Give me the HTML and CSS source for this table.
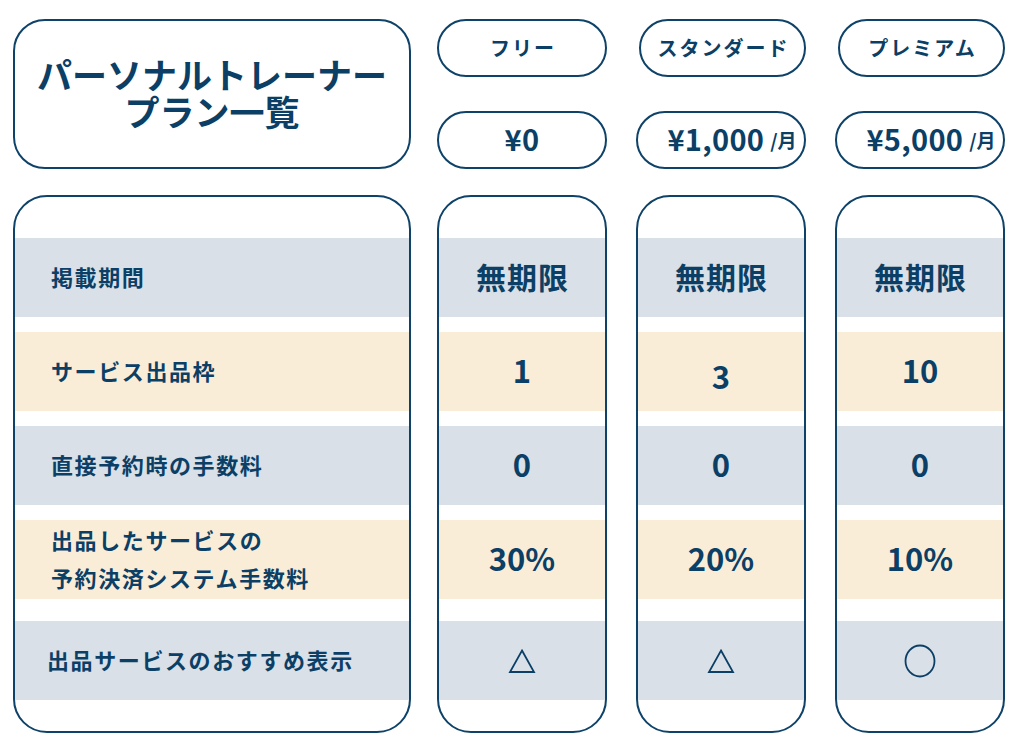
FILE: index.html
```html
<!DOCTYPE html>
<html lang="ja">
<head>
<meta charset="utf-8">
<title>パーソナルトレーナー プラン一覧</title>
<link rel="stylesheet" href="styles.css">
</head>
<body>
<div class="page">
  <div class="col col-label">
    <div class="title-box"><h1 class="title"><span class="title-line">パーソナルトレーナー</span><span class="title-line">プラン一覧</span></h1></div>
    <div class="table-box">
      <div class="row row-blue"><span class="label">掲載期間</span></div>
      <div class="row row-cream"><span class="label">サービス出品枠</span></div>
      <div class="row row-blue"><span class="label">直接予約時の手数料</span></div>
      <div class="row row-cream"><span class="label label-multi">出品したサービスの<br>予約決済システム手数料</span></div>
      <div class="row row-blue row-last"><span class="label label-wide">出品サービスのおすすめ表示</span></div>
    </div>
  </div>

  <div class="col col-plan">
    <div class="pill name">フリー</div>
    <div class="pill price price-free"><span class="amount">¥0</span></div>
    <div class="table-box">
      <div class="row row-blue"><span class="value value-kanji">無期限</span></div>
      <div class="row row-cream"><span class="value">1</span></div>
      <div class="row row-blue"><span class="value">0</span></div>
      <div class="row row-cream"><span class="value">30%</span></div>
      <div class="row row-blue row-last"><svg class="mark" width="28" height="26" viewBox="0 0 28 26"><polygon points="14,2.5 26,24 2,24" fill="none" stroke="#0b3f66" stroke-width="1.8" stroke-linejoin="miter"/></svg></div>
    </div>
  </div>

  <div class="col col-plan">
    <div class="pill name name-shift">スタンダード</div>
    <div class="pill price"><span class="amount">¥1,000</span><span class="per">/月</span></div>
    <div class="table-box">
      <div class="row row-blue"><span class="value value-kanji">無期限</span></div>
      <div class="row row-cream"><span class="value value-drop">3</span></div>
      <div class="row row-blue"><span class="value">0</span></div>
      <div class="row row-cream"><span class="value">20%</span></div>
      <div class="row row-blue row-last"><svg class="mark" width="28" height="26" viewBox="0 0 28 26"><polygon points="14,2.5 26,24 2,24" fill="none" stroke="#0b3f66" stroke-width="1.8" stroke-linejoin="miter"/></svg></div>
    </div>
  </div>

  <div class="col col-plan">
    <div class="pill name name-shift">プレミアム</div>
    <div class="pill price"><span class="amount">¥5,000</span><span class="per">/月</span></div>
    <div class="table-box">
      <div class="row row-blue"><span class="value value-kanji">無期限</span></div>
      <div class="row row-cream"><span class="value">10</span></div>
      <div class="row row-blue"><span class="value">0</span></div>
      <div class="row row-cream"><span class="value">10%</span></div>
      <div class="row row-blue row-last"><svg class="mark" width="32" height="34" viewBox="0 0 32 34"><ellipse cx="16" cy="17" rx="14.5" ry="15.5" fill="none" stroke="#0b3f66" stroke-width="1.8"/></svg></div>
    </div>
  </div>
</div>
</body>
</html>
```

FILE: styles.css
```css
* {
  box-sizing: border-box;
}

html, body {
  margin: 0;
  padding: 0;
  background: #ffffff;
}

body {
  font-family: "Noto Sans CJK JP", "Noto Sans", sans-serif;
  color: #0b3f66;
}

.page {
  display: flex;
  align-items: flex-start;
  padding: 19px 0 0 13px;
  width: 1024px;
  height: 750px;
}

.col {
  display: flex;
  flex-direction: column;
}

.col-label {
  width: 398px;
  margin-right: 26px;
}

.col-plan {
  width: 170px;
}

.col-plan + .col-plan {
  margin-left: 29px;
}

.title-box {
  height: 150px;
  border: 2px solid #0e4268;
  border-radius: 32px;
  display: flex;
  align-items: center;
  justify-content: center;
}

.title {
  margin: 0;
  font-size: 35px;
  font-weight: 700;
  text-align: center;
  display: flex;
  flex-direction: column;
  align-items: center;
  padding-bottom: 4px;
}

.title-line {
  display: block;
  line-height: 37px;
}

.pill {
  height: 58px;
  border: 2px solid #0e4268;
  border-radius: 29px;
  display: flex;
  align-items: center;
  justify-content: center;
  font-weight: 700;
}

.name {
  font-size: 20px;
  letter-spacing: 2px;
  padding-bottom: 2px;
  padding-left: 2px;
}

.name-shift {
  margin-left: 3px;
}

.price {
  margin-top: 34px;
  padding-left: 22px;
  padding-bottom: 4px;
}

.price-free {
  padding-left: 0;
}

.amount {
  font-size: 29px;
  letter-spacing: 0.3px;
}

.per {
  font-size: 19px;
  margin-left: 6px;
  padding-top: 3px;
}

.table-box {
  margin-top: 26px;
  height: 538px;
  border: 2px solid #0e4268;
  border-radius: 34px;
  padding-top: 41px;
  display: flex;
  flex-direction: column;
  overflow: hidden;
}

.row {
  height: 79px;
  flex: none;
  display: flex;
  align-items: center;
  justify-content: center;
}

.row + .row {
  margin-top: 15px;
}

.row.row-last {
  margin-top: 22px;
}

.row-blue {
  background: #d9e0e7;
}

.row-cream {
  background: #faedd8;
}

.col-label .row {
  justify-content: flex-start;
  padding-left: 36px;
}

.label {
  font-size: 22px;
  font-weight: 700;
  letter-spacing: 1.6px;
  line-height: 30px;
  padding-bottom: 3px;
}

.label-multi {
  line-height: 38px;
}

.col-label .row-last {
  padding-left: 32px;
}

.value {
  font-size: 31px;
  font-weight: 700;
  line-height: 36px;
  padding-bottom: 3px;
}

.value-kanji {
  font-size: 30px;
  letter-spacing: 1px;
  padding-left: 1px;
}

.value-drop {
  padding-top: 12px;
}

.mark {
  display: block;
}
```
